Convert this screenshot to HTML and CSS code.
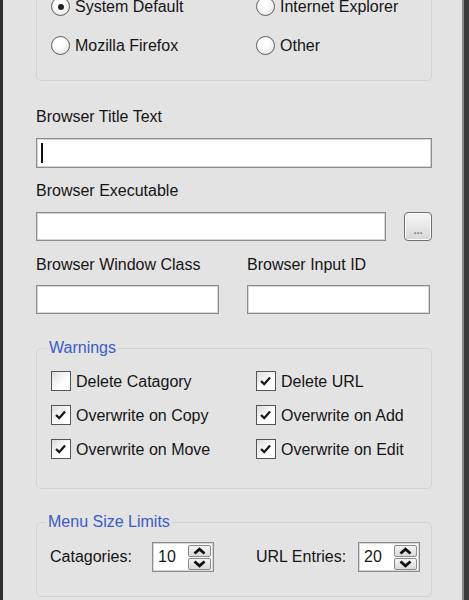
FILE: index.html
```html
<!DOCTYPE html>
<html lang="en">
<head>
    <meta charset="UTF-8">
    <meta name="viewport" content="width=device-width, initial-scale=1.0">
    <title>Browser Options</title>
    <link rel="stylesheet" href="styles.css">
</head>
<body>
    <div class="window">
        <div class="content">
            <div class="group browsers">
                <div class="option"><span class="radio checked"></span>System Default</div>
                <div class="option"><span class="radio"></span>Internet Explorer</div>
                <div class="option"><span class="radio"></span>Mozilla Firefox</div>
                <div class="option"><span class="radio"></span>Other</div>
            </div>

            <div class="field-label first">Browser Title Text</div>
            <div class="textbox tall"><span class="caret"></span></div>

            <div class="field-label">Browser Executable</div>
            <div class="exe-row">
                <div class="textbox"></div>
                <div class="browse-btn">...</div>
            </div>

            <div class="pair-row">
                <div>
                    <div class="pair-label">Browser Window Class</div>
                    <div class="textbox"></div>
                </div>
                <div>
                    <div class="pair-label">Browser Input ID</div>
                    <div class="textbox"></div>
                </div>
            </div>

            <fieldset class="box warnings">
                <legend>Warnings</legend>
                <div class="checks">
                    <div class="option"><span class="check"></span>Delete Catagory</div>
                    <div class="option"><span class="check on"><svg viewBox="0 0 20 20"><path d="M4.5 10 L8 13.5 L14.5 6"/></svg></span>Delete URL</div>
                    <div class="option"><span class="check on"><svg viewBox="0 0 20 20"><path d="M4.5 10 L8 13.5 L14.5 6"/></svg></span>Overwrite on Copy</div>
                    <div class="option"><span class="check on"><svg viewBox="0 0 20 20"><path d="M4.5 10 L8 13.5 L14.5 6"/></svg></span>Overwrite on Add</div>
                    <div class="option"><span class="check on"><svg viewBox="0 0 20 20"><path d="M4.5 10 L8 13.5 L14.5 6"/></svg></span>Overwrite on Move</div>
                    <div class="option"><span class="check on"><svg viewBox="0 0 20 20"><path d="M4.5 10 L8 13.5 L14.5 6"/></svg></span>Overwrite on Edit</div>
                </div>
            </fieldset>

            <fieldset class="box limits">
                <legend>Menu Size Limits</legend>
                <div class="limit-row">
                    <div class="limit">
                        <span class="limit-label">Catagories:</span>
                        <div class="spinner">
                            <span class="spin-value">10</span>
                            <div class="spin-buttons">
                                <span class="spin-btn"><svg viewBox="0 0 14 8"><path d="M3 6 L7 2.5 L11 6"/></svg></span>
                                <span class="spin-btn"><svg viewBox="0 0 14 8"><path d="M3 2 L7 5.5 L11 2"/></svg></span>
                            </div>
                        </div>
                    </div>
                    <div class="limit">
                        <span class="limit-label">URL Entries:</span>
                        <div class="spinner">
                            <span class="spin-value">20</span>
                            <div class="spin-buttons">
                                <span class="spin-btn"><svg viewBox="0 0 14 8"><path d="M3 6 L7 2.5 L11 6"/></svg></span>
                                <span class="spin-btn"><svg viewBox="0 0 14 8"><path d="M3 2 L7 5.5 L11 2"/></svg></span>
                            </div>
                        </div>
                    </div>
                </div>
            </fieldset>
        </div>
    </div>
</body>
</html>
```

FILE: styles.css
```css
* {
    box-sizing: border-box;
}
body {
    margin: 0;
    font-family: "Liberation Sans", Arial, sans-serif;
    font-size: 16px;
    color: #151515;
    background: #e3e3e3;
}
.window {
    height: 600px;
    overflow: hidden;
    background: #e3e3e3;
    border-left: 3px solid #2f2f2f;
    border-right: 5px solid #3a3a3a;
    box-shadow: inset -2px 0 0 #8a8a8a;
}
.content {
    padding: 0 32px 0 33px;
}
.group {
    border: 1px solid #d2d2d2;
    border-radius: 5px;
}
.browsers {
    margin-top: -20px;
    padding: 16px 14px 25px;
    display: grid;
    grid-template-columns: 205px 1fr;
    row-gap: 20px;
}
.option {
    display: flex;
    align-items: center;
    gap: 5px;
    height: 19px;
    line-height: 19px;
    white-space: nowrap;
}
.radio {
    width: 19px;
    height: 19px;
    border-radius: 50%;
    border: 1.5px solid #5e5e5e;
    background: radial-gradient(circle at 40% 35%, #ffffff 30%, #dcdcdc 100%);
    display: flex;
    align-items: center;
    justify-content: center;
    flex: none;
}
.radio.checked::after {
    content: "";
    width: 6px;
    height: 6px;
    border-radius: 50%;
    background: #222;
}
.field-label {
    margin-top: 14px;
    line-height: 18px;
}
.field-label.first {
    margin-top: 27px;
}
.textbox {
    height: 29px;
    margin-top: 11px;
    background: #fff;
    border: 1px solid #8c8c8c;
    box-shadow: inset 0 0 0 1px #d6d6d6;
    padding: 4px 3px;
}
.textbox.tall {
    height: 30px;
    margin-top: 12px;
}
.caret {
    display: block;
    width: 2px;
    height: 20px;
    background: #111;
    margin-left: 1px;
}
.exe-row {
    display: flex;
    gap: 18px;
    align-items: flex-start;
    margin-top: 12px;
}
.exe-row .textbox {
    flex: 1;
    margin-top: 0;
}
.browse-btn {
    width: 28px;
    height: 29px;
    border: 1px solid #707070;
    border-radius: 4px;
    background: linear-gradient(#f6f6f6, #e8e8e8 50%, #d6d6d6);
    box-shadow: inset 0 0 0 1px #fafafa;
    font-size: 11px;
    font-weight: bold;
    color: #777;
    text-align: center;
    line-height: 34px;
}
.pair-row {
    display: grid;
    grid-template-columns: 183px 183px;
    column-gap: 28px;
    margin-top: 15px;
}
.pair-label {
    line-height: 18px;
}
.box {
    margin: 25px 0 0;
    border: 1px solid #d2d2d2;
    border-radius: 5px;
    min-width: 0;
}
.box legend {
    color: #3b5cc6;
    padding: 0 2px;
    margin-left: -4px;
    line-height: 18px;
}
.warnings {
    padding: 14px 14px 29px;
}
.checks {
    display: grid;
    grid-template-columns: 205px 1fr;
    row-gap: 14px;
}
.checks .option {
    height: 20px;
}
.check {
    width: 20px;
    height: 20px;
    border: 1.5px solid #555;
    background: linear-gradient(135deg, #dcdcdc, #ffffff 60%);
    flex: none;
    display: flex;
}
.check svg {
    width: 100%;
    height: 100%;
}
.check path {
    fill: none;
    stroke: #1a1a1a;
    stroke-width: 2.6;
}
.limits {
    margin-top: 24px;
    padding: 11px 14px 24px 13px;
}
.limit-row {
    display: grid;
    grid-template-columns: 206px 1fr;
}
.limit {
    display: flex;
    align-items: center;
}
.limit-label {
    width: 102px;
    flex: none;
}
.spinner {
    width: 62px;
    height: 30px;
    background: #fff;
    border: 1px solid #8c8c8c;
    box-shadow: inset 0 0 0 1px #d6d6d6;
    display: flex;
    align-items: center;
    justify-content: space-between;
    padding: 0 2px 0 5px;
}
.spin-value {
    font-size: 16px;
}
.spin-buttons {
    display: flex;
    flex-direction: column;
    gap: 1px;
}
.spin-btn {
    width: 23px;
    height: 12px;
    border: 1px solid #8a8a8a;
    border-radius: 2px;
    background: linear-gradient(#f4f4f4, #dadada);
    display: flex;
}
.spin-btn svg {
    width: 100%;
    height: 100%;
}
.spin-btn path {
    fill: none;
    stroke: #111;
    stroke-width: 2.2;
}
```
